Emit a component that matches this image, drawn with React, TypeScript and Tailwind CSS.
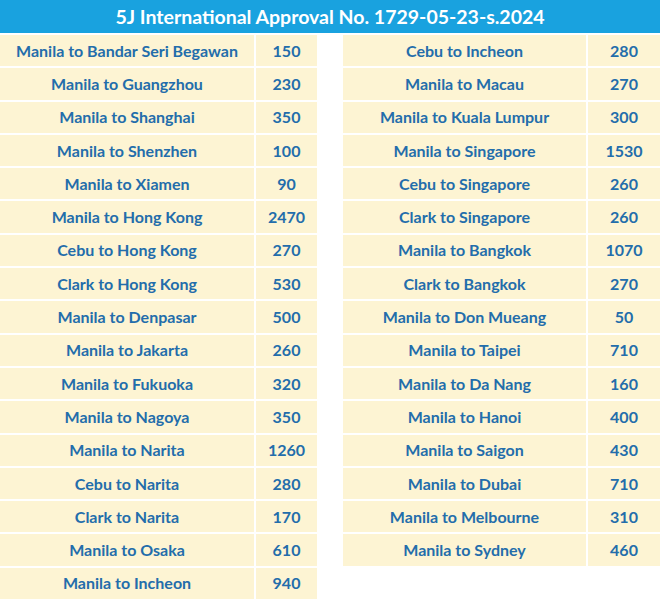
const left: [string, string][] = [
  ['Manila to Bandar Seri Begawan', '150'],
  ['Manila to Guangzhou', '230'],
  ['Manila to Shanghai', '350'],
  ['Manila to Shenzhen', '100'],
  ['Manila to Xiamen', '90'],
  ['Manila to Hong Kong', '2470'],
  ['Cebu to Hong Kong', '270'],
  ['Clark to Hong Kong', '530'],
  ['Manila to Denpasar', '500'],
  ['Manila to Jakarta', '260'],
  ['Manila to Fukuoka', '320'],
  ['Manila to Nagoya', '350'],
  ['Manila to Narita', '1260'],
  ['Cebu to Narita', '280'],
  ['Clark to Narita', '170'],
  ['Manila to Osaka', '610'],
  ['Manila to Incheon', '940'],
]

const right: [string, string][] = [
  ['Cebu to Incheon', '280'],
  ['Manila to Macau', '270'],
  ['Manila to Kuala Lumpur', '300'],
  ['Manila to Singapore', '1530'],
  ['Cebu to Singapore', '260'],
  ['Clark to Singapore', '260'],
  ['Manila to Bangkok', '1070'],
  ['Clark to Bangkok', '270'],
  ['Manila to Don Mueang', '50'],
  ['Manila to Taipei', '710'],
  ['Manila to Da Nang', '160'],
  ['Manila to Hanoi', '400'],
  ['Manila to Saigon', '430'],
  ['Manila to Dubai', '710'],
  ['Manila to Melbourne', '310'],
  ['Manila to Sydney', '460'],
]

function RouteTable({ rows, nameW, numW }: { rows: [string, string][]; nameW: string; numW: string }) {
  return (
    <div className="flex flex-col gap-[2px]">
      {rows.map(([route, count]) => (
        <div key={route} className="flex gap-[2px] h-[31.3px]">
          <div className={`${nameW} bg-[#fdf4d3] flex items-center justify-center`}>{route}</div>
          <div className={`${numW} bg-[#fdf4d3] flex items-center justify-center`}>{count}</div>
        </div>
      ))}
    </div>
  )
}

export default function App() {
  return (
    <div
      className="w-[660px] h-[603px] bg-white overflow-hidden text-[#236dab] font-bold text-[16px] antialiased"
      style={{ fontFamily: 'Lato, "Open Sans", sans-serif' }}
    >
      <div className="h-[33px] bg-[#19a2df] flex items-center justify-center text-white text-[19.5px]">
        5J International Approval No. 1729-05-23-s.2024
      </div>
      <div className="flex mt-[2px]">
        <RouteTable rows={left} nameW="w-[254px]" numW="w-[61px]" />
        <div className="w-[28px]" />
        <RouteTable rows={right} nameW="w-[243px]" numW="w-[72px]" />
      </div>
    </div>
  )
}
